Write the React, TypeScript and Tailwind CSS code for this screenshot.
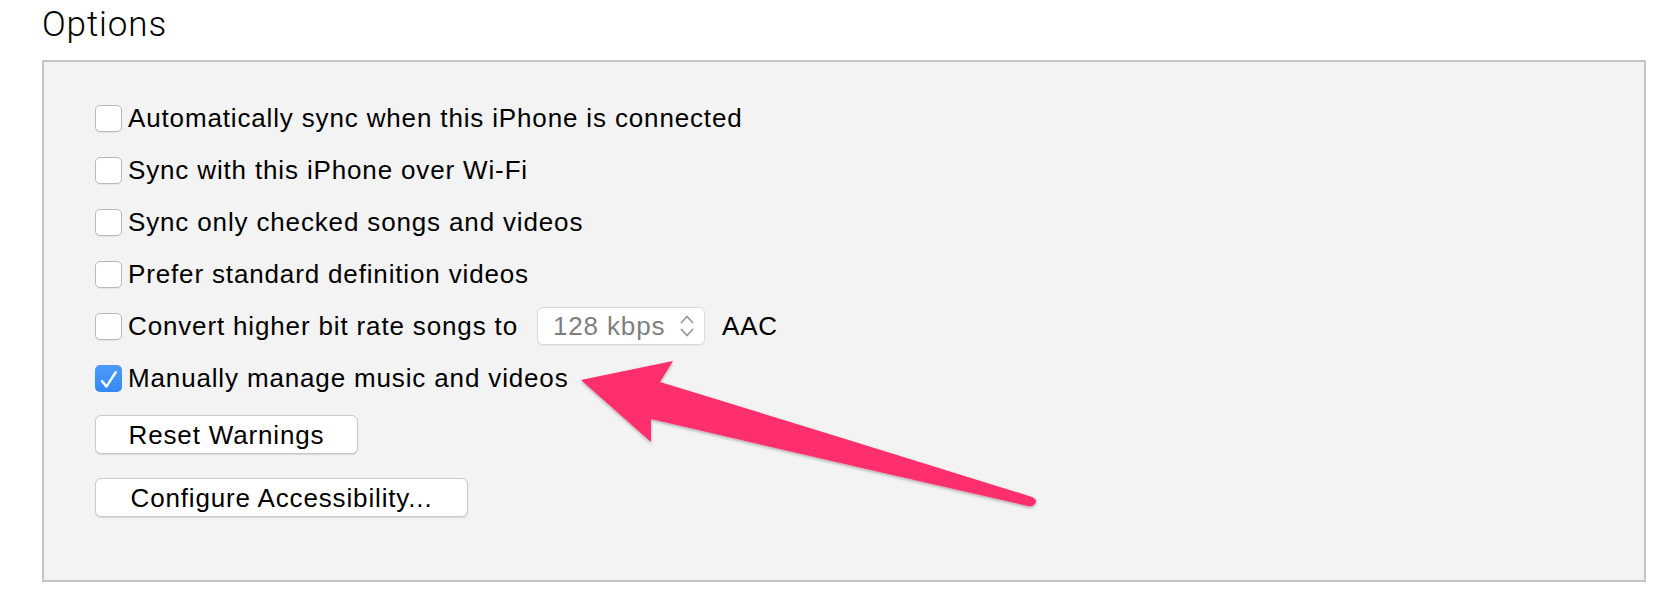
import { useState } from 'react';

const rows = [
  { label: 'Automatically sync when this iPhone is connected', checked: false },
  { label: 'Sync with this iPhone over Wi-Fi', checked: false },
  { label: 'Sync only checked songs and videos', checked: false },
  { label: 'Prefer standard definition videos', checked: false },
];

const Checkbox = ({ checked }: { checked: boolean }) =>
  checked ? (
    <span className="flex h-[27px] w-[27px] shrink-0 items-center justify-center rounded-[5px] bg-gradient-to-b from-[#4c9bfb] to-[#3588f6]">
      <svg width="27" height="27" viewBox="0 0 27 27">
        <path d="M7 16 L11.4 21.6 L20.8 7.2" fill="none" stroke="#fff" strokeWidth="2.4" strokeLinecap="round" strokeLinejoin="round" />
      </svg>
    </span>
  ) : (
    <span className="block h-[27px] w-[27px] shrink-0 rounded-[5px] border border-[#b9b9b9] bg-white shadow-[0_1px_0_rgba(0,0,0,0.05)]" />
  );

const App = () => {
  const [manual] = useState(true);

  return (
    <div className="relative h-[610px] w-[1672px] overflow-hidden bg-white font-['Liberation_Sans',Arial,sans-serif] tracking-[0.85px] text-black">
      <h1 className="pl-[42px] pt-[7px] font-['Roboto',sans-serif] text-[35px] font-light leading-[35px] tracking-[0.9px]">
        Options
      </h1>

      <div className="ml-[42px] mt-[18px] h-[522px] w-[1604px] border-2 border-[#c4c4c4] bg-[#f3f3f3] pl-[51px] pt-[30px]">
        {rows.map((r) => (
          <div key={r.label} className="flex h-[52px] items-center gap-[6px] text-[26px]">
            <Checkbox checked={r.checked} />
            <span>{r.label}</span>
          </div>
        ))}

        <div className="flex h-[52px] items-center text-[26px]">
          <Checkbox checked={false} />
          <span className="ml-[6px]">Convert higher bit rate songs to</span>
          <div className="ml-[19px] flex h-[38px] w-[168px] items-center justify-between rounded-[6px] border border-[#dadada] bg-white pl-[15px] pr-[10px] text-[#7f7f7f] shadow-[0_1px_1px_rgba(0,0,0,0.06)]">
            <span>128 kbps</span>
            <svg width="14" height="24" viewBox="0 0 14 24">
              <path d="M1.5 8.5 L7 2.5 L12.5 8.5" fill="none" stroke="#999" strokeWidth="1.8" strokeLinecap="round" strokeLinejoin="round" />
              <path d="M1.5 15.5 L7 21.5 L12.5 15.5" fill="none" stroke="#999" strokeWidth="1.8" strokeLinecap="round" strokeLinejoin="round" />
            </svg>
          </div>
          <span className="ml-[17px]">AAC</span>
        </div>

        <div className="flex h-[52px] items-center gap-[6px] text-[26px]">
          <Checkbox checked={manual} />
          <span>Manually manage music and videos</span>
        </div>

        <div className="mt-[11px] flex flex-col items-start gap-[24px] text-[26px]">
          <button className="h-[39px] w-[263px] rounded-[6px] border border-[#c9c9c9] bg-white leading-none shadow-[0_1px_1px_rgba(0,0,0,0.12)]">
            Reset Warnings
          </button>
          <button className="h-[39px] w-[373px] rounded-[6px] border border-[#c9c9c9] bg-white leading-none shadow-[0_1px_1px_rgba(0,0,0,0.12)]">
            Configure Accessibility...
          </button>
        </div>
      </div>

      <svg className="pointer-events-none absolute left-0 top-0" width="1672" height="610" viewBox="0 0 1672 610">
        <defs>
          <filter id="sh" x="-10%" y="-10%" width="120%" height="130%">
            <feDropShadow dx="0" dy="1.5" stdDeviation="1.5" floodColor="#000" floodOpacity="0.3" />
          </filter>
        </defs>
        <path
          d="M581 380 L673 361 L660 382 Q850 440 1032 497 Q1038 500 1035 504 Q1032 507 1028 506 Q840 463 651 419 L651 442 Z"
          fill="#ff2d6c"
          filter="url(#sh)"
        />
      </svg>
    </div>
  );
};

export default App;
